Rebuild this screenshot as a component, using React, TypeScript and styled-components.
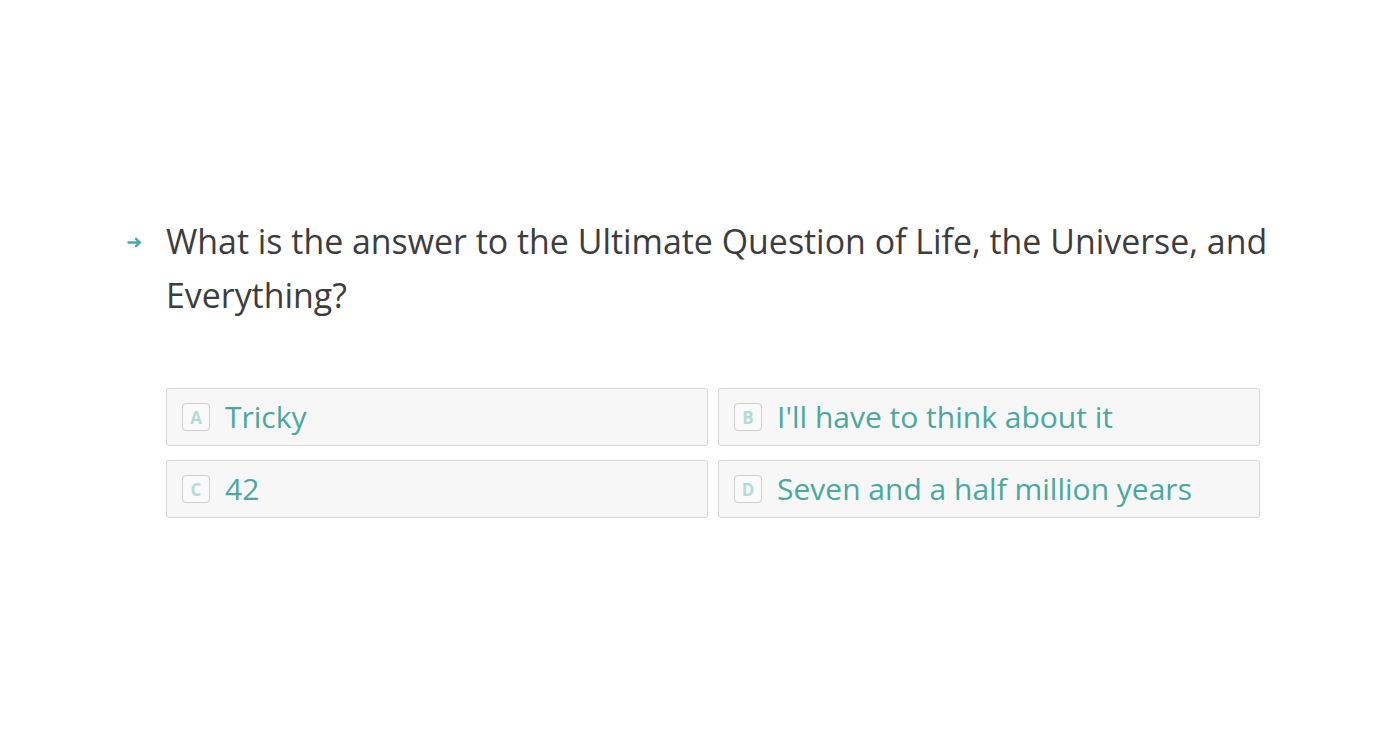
import styled, { createGlobalStyle } from "styled-components";

const GlobalStyle = createGlobalStyle`
  html, body {
    margin: 0;
    padding: 0;
    background: #fff;
  }
  body {
    font-family: "Open Sans", "Noto Sans", sans-serif;
  }
`;

const Page = styled.div`
  width: 100%;
  height: 750px;
  display: flex;
  justify-content: center;
`;

const Question = styled.div`
  width: 1158px;
  padding-top: 214px;
  display: flex;
  align-items: flex-start;
`;

const Arrow = styled.div`
  width: 45px;
  padding-top: 23px;
  padding-left: 6px;
  color: #4aaaa4;
  flex-shrink: 0;
  box-sizing: border-box;
  display: flex;
`;

const Body = styled.div`
  flex: 1;
`;

const Title = styled.div`
  font-size: 33.9px;
  line-height: 54px;
  color: #3d3d3d;
  margin: 0 0 66px;
`;

const Choices = styled.div`
  display: grid;
  grid-template-columns: 542px 542px;
  column-gap: 10px;
  row-gap: 14px;
`;

const Choice = styled.div`
  height: 58px;
  box-sizing: border-box;
  background: #f7f7f7;
  border: 1px solid #d6d6d6;
  border-radius: 3px;
  display: flex;
  align-items: center;
  padding-left: 15px;
  gap: 15px;
`;

const Key = styled.span`
  width: 28px;
  height: 28px;
  box-sizing: border-box;
  border: 1px solid #cfcfcf;
  border-radius: 4px;
  background: #fafafa;
  color: #b3dcd7;
  font-size: 17px;
  font-weight: 700;
  display: flex;
  align-items: center;
  justify-content: center;
`;

const Label = styled.span`
  font-size: 30px;
  color: #4aa8a0;
  line-height: 1;
`;

const options = [
  ["A", "Tricky"],
  ["B", "I'll have to think about it"],
  ["C", "42"],
  ["D", "Seven and a half million years"],
];

export default function App() {
  return (
    <>
      <GlobalStyle />
      <Page>
        <Question>
          <Arrow>
            <svg width="16" height="11" viewBox="0 0 16 11" fill="none">
              <path d="M1.5 5.5h11.5M9 1.8l3.8 3.7L9 9.2" stroke="currentColor" strokeWidth="2.4" strokeLinecap="round" strokeLinejoin="round" />
            </svg>
          </Arrow>
          <Body>
            <Title>
              What is the answer to the Ultimate Question of Life, the Universe, and Everything?
            </Title>
            <Choices>
              {options.map(([k, t]) => (
                <Choice key={k}>
                  <Key>{k}</Key>
                  <Label>{t}</Label>
                </Choice>
              ))}
            </Choices>
          </Body>
        </Question>
      </Page>
    </>
  );
}
